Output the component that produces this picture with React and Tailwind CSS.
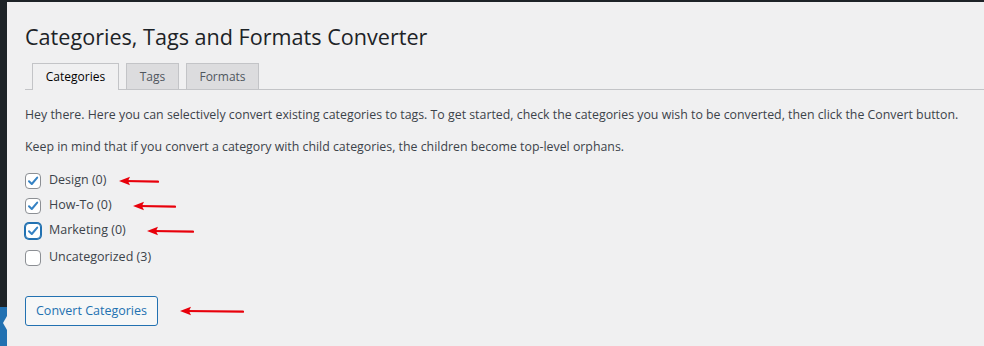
import React from "react";

const categories = [
    { name: "Design", count: 0, checked: true, arrow: { gap: 13, width: 40 } },
    { name: "How-To", count: 0, checked: true, arrow: { gap: 21, width: 43 } },
    { name: "Marketing", count: 0, checked: true, focused: true, arrow: { gap: 21, width: 47 } },
    { name: "Uncategorized", count: 3, checked: false },
];

// hand drawn red annotation arrow pointing left
const RedArrow = ({ width, gap }) => (
    <svg width={width} height="10" viewBox={`0 0 ${width} 10`} style={{ marginLeft: gap }} className="shrink-0">
        <path d={`M6 5 L${width - 1} 5.6`} stroke="#e8000b" strokeWidth="2.2" strokeLinecap="round" />
        <path d="M0 5 L11 0.8 L9 5 L11 9.2 Z" fill="#e8000b" />
    </svg>
);

const Checkbox = ({ checked, focused }) => (
    <span
        className={
            "w-4 h-4 shrink-0 rounded-[4px] bg-white flex items-center justify-center border " +
            (focused ? "border-[#2271b1] shadow-[0_0_0_1px_#2271b1]" : "border-[#8c8f94]")
        }
    >
        {checked && (
            <svg width="14" height="14" viewBox="0 0 14 14">
                <path d="M3 7.2 L5.8 10 L11.2 3.6" fill="none" stroke="#3582c4" strokeWidth="2" strokeLinecap="round" strokeLinejoin="round" />
            </svg>
        )}
    </span>
);

export default function App() {
    return (
        <div className="flex min-h-[346px] bg-[#f0f0f1] text-[#3c434a]" style={{ fontFamily: '"Open Sans", "Noto Sans", Arial, sans-serif' }}>
            {/* admin menu edge */}
            <div className="w-[7px] flex flex-col bg-[#1d2327]">
                <div className="h-[307px]" />
                <div className="flex-1 bg-[#2271b1] relative">
                    <span className="absolute right-0 top-[9px] w-0 h-0 border-y-[7px] border-y-transparent border-r-[4px] border-r-[#f0f0f1]" />
                </div>
            </div>

            <div className="flex-1 border-t-2 border-[#1d2327] pl-[18px]">
                <h1 className="pt-[20px] text-[21.6px] leading-[30px] text-[#1d2327] font-normal">
                    Categories, Tags and Formats Converter
                </h1>

                {/* tabs */}
                <div className="mt-[11px] flex gap-[7px] pl-[7px] border-b border-[#c3c4c7]">
                    <div className="w-[87px] h-[27px] -mb-px flex items-center justify-center border border-b-0 border-[#c3c4c7] bg-[#f0f0f1] text-[12px] font-medium text-[#000]">
                        Categories
                    </div>
                    <div className="w-[53px] h-[26px] flex items-center justify-center border border-b-0 border-[#c3c4c7] bg-[#dcdcde] text-[12px] font-medium text-[#50575e]">
                        Tags
                    </div>
                    <div className="w-[73px] h-[26px] flex items-center justify-center border border-b-0 border-[#c3c4c7] bg-[#dcdcde] text-[12px] font-medium text-[#50575e]">
                        Formats
                    </div>
                </div>

                <p className="mt-[15px] text-[12.35px] leading-[20px]">
                    Hey there. Here you can selectively convert existing categories to tags. To get started, check the categories you wish to be converted, then click the Convert button.
                </p>
                <p className="mt-[12px] text-[12.35px] leading-[20px]">
                    Keep in mind that if you convert a category with child categories, the children become top-level orphans.
                </p>

                <ul className="mt-[11px] flex flex-col">
                    {categories.map((cat, i) => (
                        <li key={cat.name} className={"h-[25px] flex items-center " + (i === 3 ? "mt-[2px]" : "")}>
                            <Checkbox checked={cat.checked} focused={cat.focused} />
                            <span className="ml-2 text-[12.5px]">
                                {cat.name} ({cat.count})
                            </span>
                            {cat.arrow && <RedArrow width={cat.arrow.width} gap={cat.arrow.gap} />}
                        </li>
                    ))}
                </ul>

                <div className="mt-[26px] flex items-center">
                    <button className="h-[30px] px-[10px] rounded-[3px] border border-[#2271b1] bg-[#f6f7f7] text-[#2271b1] text-[12.5px]">
                        Convert Categories
                    </button>
                    <RedArrow width={64} gap={22} />
                </div>
            </div>
        </div>
    );
}
